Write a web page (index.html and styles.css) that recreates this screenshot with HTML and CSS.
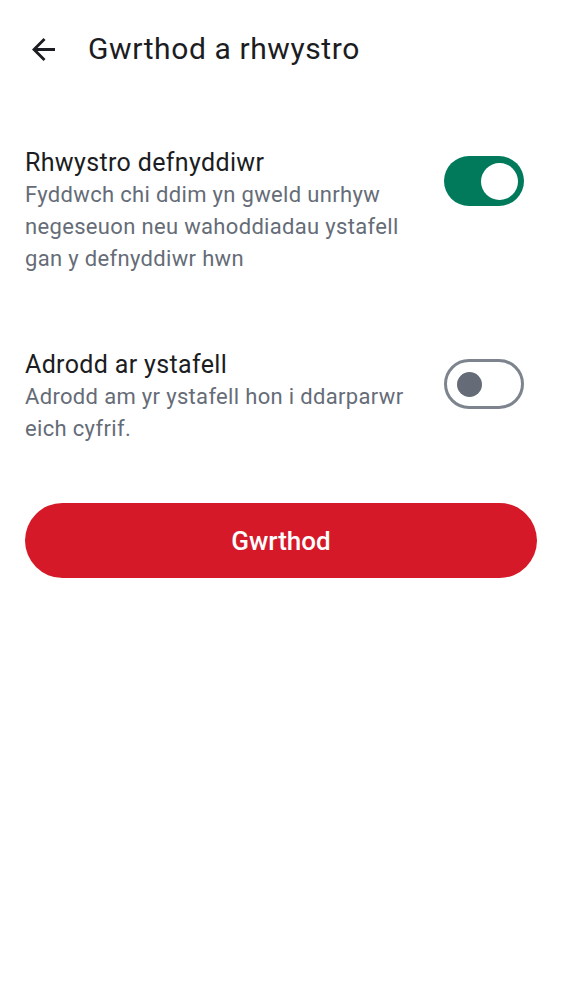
FILE: index.html
```html
<!DOCTYPE html>
<html lang="cy">
<head>
<meta charset="utf-8">
<title>Gwrthod a rhwystro</title>
<link rel="stylesheet" href="styles.css">
</head>
<body>
<header class="topbar">
  <button class="back" aria-label="Yn ôl">
    <svg viewBox="4 4 16 16" width="23" height="23"><path d="M20 11H7.83l5.59-5.59L12 4l-8 8 8 8 1.41-1.41L7.83 13H20v-2z" fill="#1b1d22"/></svg>
  </button>
  <h1 class="title">Gwrthod a rhwystro</h1>
</header>
<main class="content">
  <div class="row row-first">
    <div class="text">
      <div class="row-title">Rhwystro defnyddiwr</div>
      <div class="row-desc">Fyddwch chi ddim yn gweld unrhyw negeseuon neu wahoddiadau ystafell gan y defnyddiwr hwn</div>
    </div>
    <div class="switch on"><span class="knob"></span></div>
  </div>
  <div class="row row-second">
    <div class="text">
      <div class="row-title">Adrodd ar ystafell</div>
      <div class="row-desc">Adrodd am yr ystafell hon i ddarparwr eich cyfrif.</div>
    </div>
    <div class="switch off"><span class="knob"></span></div>
  </div>
  <button class="decline">Gwrthod</button>
</main>
</body>
</html>
```
FILE: styles.css
```css
* { box-sizing: border-box; }
body {
  margin: 0;
  background: #ffffff;
  font-family: Roboto, "Noto Sans", sans-serif;
  color: #1b1d22;
}
.topbar {
  height: 98px;
  display: flex;
  align-items: center;
  padding-left: 32px;
  gap: 33px;
}
.back {
  border: 0;
  background: none;
  padding: 0;
  width: 23px;
  height: 23px;
  display: flex;
}
.title {
  margin: 0;
  font-size: 30px;
  letter-spacing: 0.6px;
  font-weight: 400;
  line-height: 36px;
  color: #1b1d22;
}
.content {
  padding: 0 25px;
}
.row {
  display: flex;
  align-items: flex-start;
}
.row-first { margin-top: 49px; }
.row-second { margin-top: 74px; }
.text {
  flex: 1;
  min-width: 0;
}
.row-title {
  font-size: 25px;
  letter-spacing: 0.35px;
  line-height: 32px;
  color: #1b1d22;
}
.row-desc {
  font-size: 22px;
  letter-spacing: 0.33px;
  line-height: 32px;
  color: #656c77;
}
.switch {
  flex: none;
  width: 80px;
  height: 50px;
  border-radius: 25px;
  margin-left: 20px;
  margin-right: 13px;
  margin-top: 9px;
  display: flex;
  align-items: center;
}
.row-second .switch { margin-top: 10px; }
.switch.on {
  background: #017a5c;
  justify-content: flex-end;
  padding-right: 6px;
}
.switch.on .knob {
  width: 37px;
  height: 37px;
  border-radius: 50%;
  background: #ffffff;
}
.switch.off {
  border: 3px solid #7d848d;
  background: #ffffff;
  padding-left: 10px;
}
.switch.off .knob {
  width: 25px;
  height: 25px;
  border-radius: 50%;
  background: #656c77;
}
.decline {
  display: block;
  width: 100%;
  height: 75px;
  margin-top: 58px;
  border: 0;
  border-radius: 38px;
  background: #d51928;
  color: #ffffff;
  font-family: Roboto, "Noto Sans", sans-serif;
  font-size: 26px;
  font-weight: 500;
}
```
